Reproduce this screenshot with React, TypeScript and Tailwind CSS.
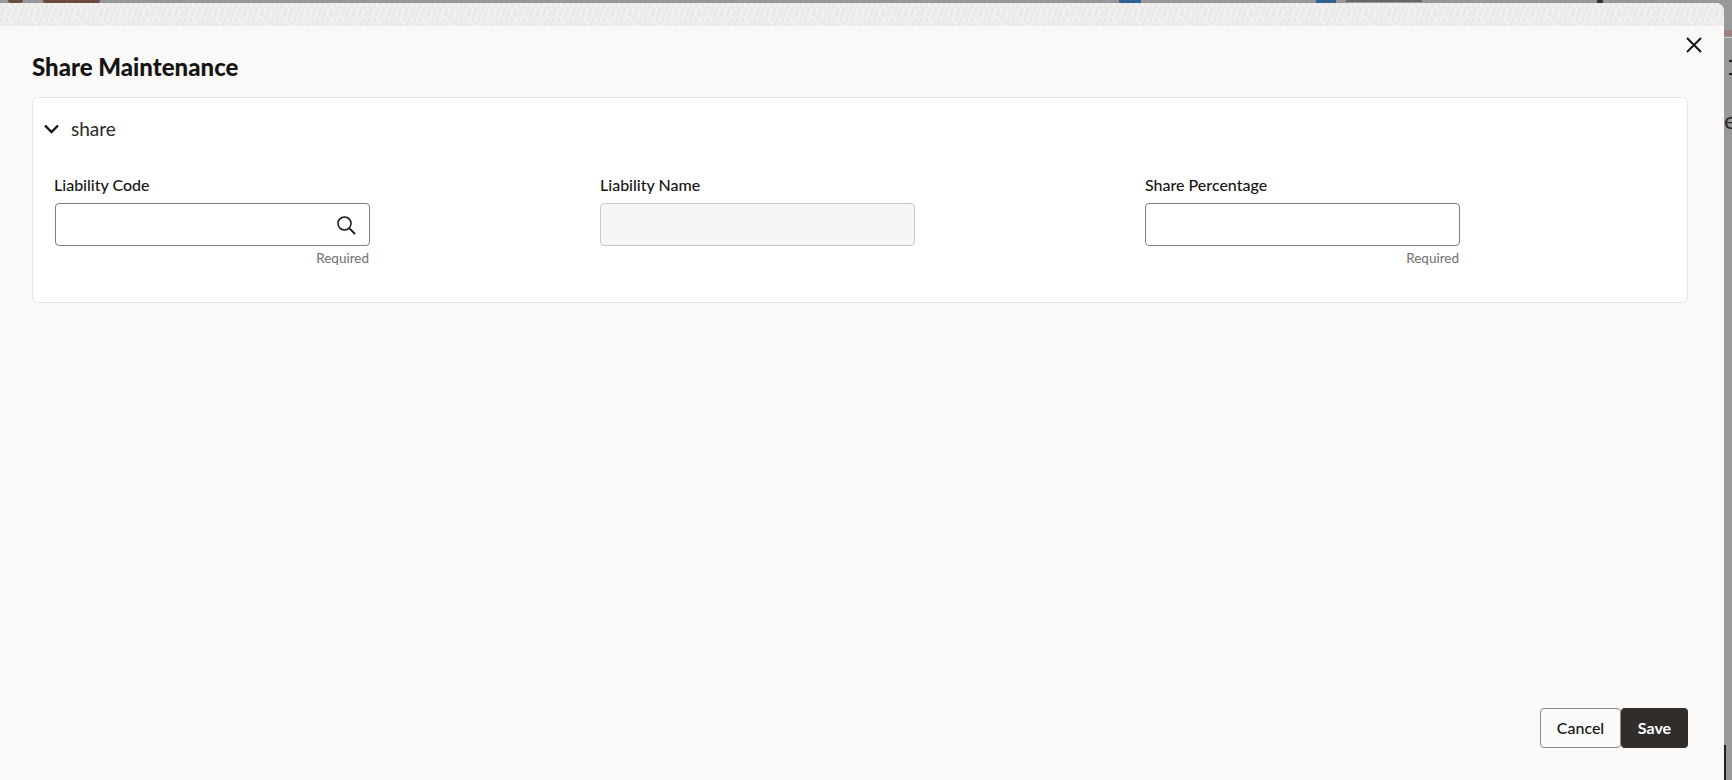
import React from "react";

const font = "font-['Lato','Noto_Sans',sans-serif]";

function Texture() {
  return (
    <svg className="block w-full h-[23px]" aria-hidden="true">
      <defs>
        <pattern id="tex" width="23" height="14" patternUnits="userSpaceOnUse">
          <rect width="23" height="14" fill="#efeeed" />
          <path d="M1 0v5M4 3v6M7 1v4M10 6v6M13 0v5M16 4v7M19 1v5M22 6v5M2 8v5M8 8v5M14 9v4M20 9v4" stroke="#e6e5e4" strokeWidth="1.2" />
          <path d="M3 1v5M6 6v5M9 0v5M12 3v7M15 0v3M18 7v6M21 0v4M5 10v4M11 11v3M17 11v3" stroke="#f6f5f4" strokeWidth="1" />
        </pattern>
      </defs>
      <rect width="100%" height="100%" fill="url(#tex)" />
    </svg>
  );
}

function SearchGlyph() {
  return (
    <svg viewBox="0 0 20 20" className="w-[20px] h-[20px] text-[#161513]" fill="none" stroke="currentColor" strokeWidth="1.5" aria-hidden="true">
      <circle cx="8.5" cy="8.5" r="6.5" />
      <path d="M13.2 13.2L19 19" strokeWidth="1.8" />
    </svg>
  );
}

function Field({ label, required, disabled, icon }: { label: string; required?: boolean; disabled?: boolean; icon?: boolean }) {
  return (
    <div className="w-[315px]">
      <div className={icon ? "text-[16px] leading-[20px] font-medium text-[#161513] -ml-px mb-[8px]" : "text-[16px] leading-[20px] font-medium text-[#161513] mb-[8px]"}>{label}</div>
      <div
        className={
          disabled
            ? "h-[43px] rounded-[4px] border border-[#c9c8c6] bg-[#f5f5f5]"
            : "h-[43px] rounded-[4px] border border-[#807e7b] bg-white flex items-center justify-end pr-[13px]"
        }
      >
        {icon && <SearchGlyph />}
      </div>
      {required && <div className="mt-[3px] pr-px text-right text-[13.5px] leading-[18px] text-[#6f6e6b]">Required</div>}
    </div>
  );
}

export default function App() {
  return (
    <div className={`w-full h-[780px] overflow-hidden bg-[#98979a] flex flex-col ${font}`}>
      {/* sliver of the page behind the dialog, along the top */}
      <div className="h-[3px] flex items-start">
        <div className="ml-[8px] w-[15px] h-[3px] rounded-b-full bg-[#6b4a40]" />
        <div className="ml-[20px] w-[57px] h-[3px] rounded-b-[2px] bg-[#6b4a40]" />
        <div className="ml-[1019px] w-[22px] h-[3px] bg-[#2f6190]" />
        <div className="ml-[175px] w-[20px] h-[3px] bg-[#2f6190]" />
        <div className="ml-[10px] w-[76px] h-[2px] bg-[#67666b]" />
        <div className="ml-[175px] w-[6px] h-[3px] bg-[#333333]" />
      </div>

      <div className="flex-1 flex min-h-0">
        {/* dialog */}
        <div className="w-[1724px] rounded-tr-[8px] overflow-hidden bg-[#faf9f7] flex flex-col">
          <Texture />
          <div className="flex justify-between h-[71px] pl-[32px] pr-[22px] pt-[25px]">
            <h1 className="text-[24px] leading-[32px] font-black text-[#161513]">Share Maintenance</h1>
            <svg viewBox="0 0 16 16" className="w-[16px] h-[16px] mt-[-14px] text-[#161513]" fill="none" stroke="currentColor" strokeWidth="2" aria-hidden="true">
              <path d="M1 1l14 14M15 1L1 15" />
            </svg>
          </div>

          <div className="ml-[32px] w-[1656px] h-[206px] rounded-[6px] border border-[#e6e5e3] bg-white">
            <div className="flex items-center h-[60px] pl-[10px] pt-[1px]">
              <svg viewBox="0 0 16 10" className="w-[17px] h-[10px] text-[#161513]" fill="none" stroke="currentColor" strokeWidth="2.4" aria-hidden="true">
                <path d="M1.5 1.5L8 8l6.5-6.5" />
              </svg>
              <span className="ml-[11px] text-[19px] leading-[26px] text-[#2b2a28]">share</span>
            </div>
            <div className="flex pl-[22px] pt-[17px] gap-[230px]">
              <Field label="Liability Code" required icon />
              <Field label="Liability Name" disabled />
              <Field label="Share Percentage" required />
            </div>
          </div>

          <div className="mt-auto mb-[32px] mr-[36px] flex justify-end">
            <button className="w-[81px] h-[40px] rounded-[4px] border border-[#8a8987] bg-[#fbfaf9] text-[16px] font-medium text-[#161513]">Cancel</button>
            <button className="w-[67px] h-[40px] rounded-[4px] bg-[#312d2a] text-[16px] font-bold text-white">Save</button>
          </div>
        </div>

        {/* sliver of the page behind the dialog, along the right */}
        <div className="w-[8px] flex flex-col overflow-hidden">
          <div className="mt-[27px] h-[6px] bg-[#9c7f7b]" />
          <div className="mt-px h-px bg-[#c9c8c8]" />
          <div className="mt-[22px] ml-[5px] h-[2px] bg-[#222222]" />
          <div className="mt-[11px] ml-[5px] h-[2px] bg-[#222222]" />
          <div className="mt-[31px] h-[28px] text-[24px] leading-[28px] text-[#2a2a2a]">e</div>
          <div className="mt-auto w-[2px] h-[35px] bg-[#1f1f1f]" />
        </div>
      </div>
    </div>
  );
}
